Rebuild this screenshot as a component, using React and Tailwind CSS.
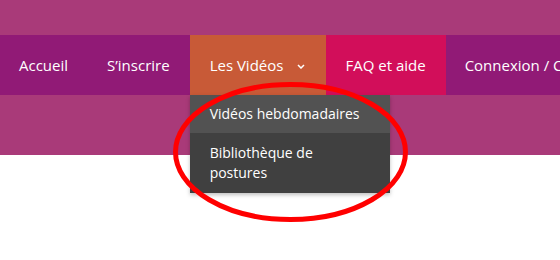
import React from 'react'

const navItems = [
  { label: 'Accueil', bg: '' },
  { label: 'S’inscrire', bg: '' },
  { label: 'Les Vidéos', bg: 'bg-[#c85a37]', dropdown: true },
  { label: 'FAQ et aide', bg: 'bg-[#d20e5a]' },
  { label: 'Connexion / Créer un compte', bg: '' },
]

function Chevron() {
  return (
    <svg width="8" height="5" viewBox="0 0 8 5" className="ml-[14px] mt-[2px]">
      <path d="M1 1l3 3 3-3" fill="none" stroke="white" strokeWidth="1.5" />
    </svg>
  )
}

function Dropdown() {
  return (
    <div className="absolute left-0 top-full w-[200px] whitespace-normal shadow-[0_2px_4px_rgba(0,0,0,0.25)] text-[14px] leading-5 text-white z-10">
      <div className="bg-[#525252] px-5 py-[9px]">Vidéos hebdomadaires</div>
      <div className="bg-[#404040] pl-5 pr-8 py-[10px]">Bibliothèque de postures</div>
    </div>
  )
}

export default function App() {
  return (
    <div
      className="relative w-[560px] h-[260px] overflow-hidden bg-white"
      style={{ fontFamily: '"Open Sans", "Liberation Sans", sans-serif' }}
    >
      <div className="h-[155px] bg-[#a93a79] pt-[35px]">
        <nav className="flex h-[60px] bg-[#911a76] text-[15px] text-white whitespace-nowrap">
          {navItems.map((item) => (
            <div
              key={item.label}
              className={`relative flex items-center shrink-0 ${item.dropdown ? 'pl-5 pr-[21px]' : 'pl-[19px] pr-5'} ${item.bg}`}
            >
              <span>{item.label}</span>
              {item.dropdown && <Chevron />}
              {item.dropdown && <Dropdown />}
            </div>
          ))}
        </nav>
      </div>

      <svg className="absolute inset-0 pointer-events-none z-20" width="560" height="260">
        <ellipse cx="290.5" cy="152" rx="115" ry="67.5" fill="none" stroke="#ff0000" strokeWidth="5" />
      </svg>
    </div>
  )
}
